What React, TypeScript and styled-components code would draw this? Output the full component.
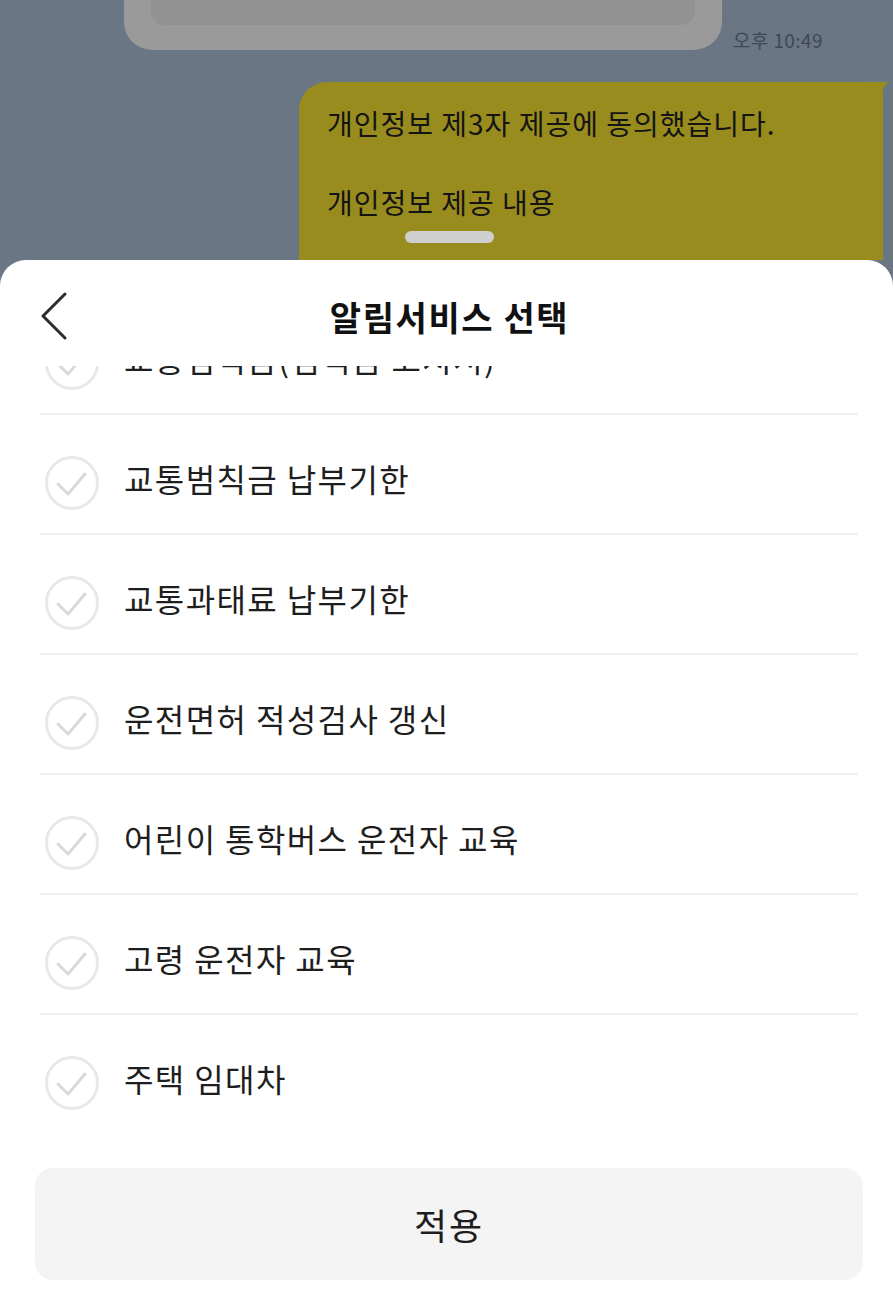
import React from "react";
import styled, { createGlobalStyle } from "styled-components";

const GlobalStyle = createGlobalStyle`
  html, body { margin: 0; padding: 0; }
  body {
    width: 893px;
    height: 1315px;
    overflow: hidden;
    background: #6a7684;
    font-family: "Noto Sans CJK KR", "Noto Sans", sans-serif;
  }
  * { box-sizing: border-box; }
`;

const Page = styled.div`
  width: 893px;
  height: 1315px;
  display: flex;
  flex-direction: column;
  background: #6a7684;
`;

const ChatArea = styled.div`
  position: relative;
  height: 260px;
  flex: none;
  overflow: hidden;
  display: flex;
  flex-direction: column;
`;

const GreyRow = styled.div`
  display: flex;
  align-items: flex-end;
  margin-top: -40px;
  padding-left: 124px;
  gap: 11px;
`;

const GreyBubble = styled.div`
  width: 598px;
  height: 90px;
  background: #9a9a9a;
  border-radius: 28px;
  padding: 0 27px;
`;

const GreyInner = styled.div`
  height: 65px;
  background: #929292;
  border-radius: 0 0 14px 14px;
`;

const Time = styled.span`
  font-size: 19px;
  color: #3e4855;
  letter-spacing: 0.4px;
  line-height: 1;
  margin-bottom: 1px;
`;

const MyBubbleRow = styled.div`
  display: flex;
  justify-content: flex-end;
  padding-right: 10px;
  margin-top: 32px;
`;

const MyBubble = styled.div`
  position: relative;
  width: 584px;
  height: 220px;
  background: #998c1e;
  border-radius: 28px 12px 0 0;
  padding: 24px 28px;
  color: #141414;
  font-size: 28px;
  line-height: 34px;
  letter-spacing: 1px;
`;

const Tail = styled.svg`
  position: absolute;
  right: -6px;
  top: 0;
`;

const Para = styled.p`
  margin: 0 0 45px;
`;

const Handle = styled.div`
  position: absolute;
  left: 405px;
  top: 231px;
  width: 89px;
  height: 12px;
  border-radius: 6px;
  background: #cfcfcf;
`;

const Sheet = styled.div`
  flex: 1;
  background: #ffffff;
  border-radius: 26px 26px 0 0;
  display: flex;
  flex-direction: column;
  min-height: 0;
`;

const Header = styled.div`
  height: 106px;
  flex: none;
  display: grid;
  grid-template-columns: 100px 1fr 100px;
  align-items: start;
  padding-top: 31px;
`;

const BackButton = styled.button`
  border: 0;
  background: none;
  padding: 0 0 0 40px;
  height: 50px;
  display: flex;
  align-items: center;
  cursor: pointer;
`;

const Title = styled.h1`
  margin: 0;
  text-align: center;
  font-size: 34px;
  font-weight: 700;
  color: #111;
  line-height: 52px;
  letter-spacing: 1.6px;
  padding-left: 6px;
`;

const List = styled.div`
  flex: 1;
  overflow: hidden;
  min-height: 0;
`;

const ListInner = styled.ul`
  list-style: none;
  margin: -71px 0 0;
  padding: 0;
`;

const Row = styled.li<{ $last?: boolean }>`
  height: 120px;
  margin: 0 35px 0 40px;
  padding: 41px 0 0 5px;
  border-bottom: ${(p) => (p.$last ? "0" : "2px solid #f0f0f0")};
  display: flex;
  align-items: flex-start;
  gap: 25px;
`;

const Label = styled.span`
  font-size: 32px;
  line-height: 44px;
  color: #1e1e1e;
  letter-spacing: 1.4px;
  white-space: nowrap;
`;

const Footer = styled.div`
  flex: none;
  padding: 0 30px 35px 35px;
`;

const ApplyButton = styled.button`
  width: 100%;
  height: 112px;
  border: 0;
  border-radius: 18px;
  background: #f4f4f4;
  font-family: "Noto Sans CJK KR", "Noto Sans", sans-serif;
  font-size: 36px;
  letter-spacing: 2px;
  color: #1e1e1e;
  cursor: pointer;
`;

const CheckCircle = () => (
  <svg width="54" height="54" viewBox="0 0 54 54" style={{ flex: "none" }}>
    <circle cx="27" cy="27" r="25.5" fill="none" stroke="#e8e8e8" strokeWidth="3" />
    <path
      d="M13 28 L23 38 L40 18"
      fill="none"
      stroke="#d9d9d9"
      strokeWidth="3"
      strokeLinecap="round"
      strokeLinejoin="round"
    />
  </svg>
);

const items = [
  "교통범칙금(범칙금 고지서)",
  "교통범칙금 납부기한",
  "교통과태료 납부기한",
  "운전면허 적성검사 갱신",
  "어린이 통학버스 운전자 교육",
  "고령 운전자 교육",
  "주택 임대차",
];

export default function App() {
  return (
    <>
      <GlobalStyle />
      <Page>
        <ChatArea>
          <GreyRow>
            <GreyBubble>
              <GreyInner />
            </GreyBubble>
            <Time>오후 10:49</Time>
          </GreyRow>
          <MyBubbleRow>
            <MyBubble>
              <Tail width="22" height="14" viewBox="0 0 22 14">
                <path d="M0 0 L22 0 Q16 4 14 12 Q8 4 0 2 Z" fill="#998c1e" />
              </Tail>
              <Para>개인정보 제3자 제공에 동의했습니다.</Para>
              <Para>개인정보 제공 내용</Para>
            </MyBubble>
          </MyBubbleRow>
          <Handle />
        </ChatArea>
        <Sheet>
          <Header>
            <BackButton aria-label="뒤로">
              <svg width="28" height="48" viewBox="0 0 28 48">
                <path
                  d="M25 2 L3 24 L25 46"
                  fill="none"
                  stroke="#2a2a2a"
                  strokeWidth="3"
                  strokeLinecap="round"
                  strokeLinejoin="round"
                />
              </svg>
            </BackButton>
            <Title>알림서비스 선택</Title>
            <div />
          </Header>
          <List>
            <ListInner>
              {items.map((t, i) => (
                <Row key={t} $last={i === items.length - 1}>
                  <CheckCircle />
                  <Label>{t}</Label>
                </Row>
              ))}
            </ListInner>
          </List>
          <Footer>
            <ApplyButton>적용</ApplyButton>
          </Footer>
        </Sheet>
      </Page>
    </>
  );
}
